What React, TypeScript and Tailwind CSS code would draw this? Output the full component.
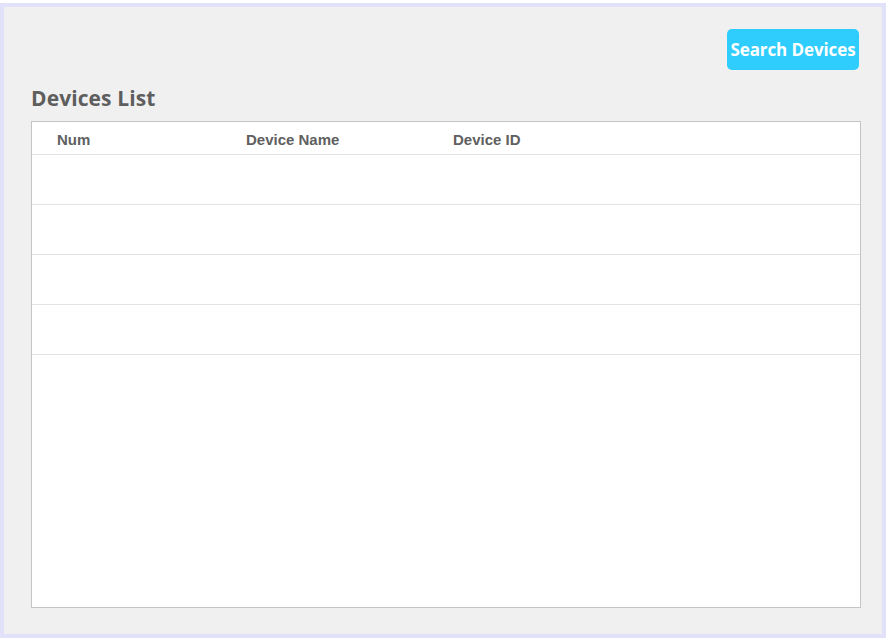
export default function App() {
    const rows = [0, 1, 2, 3];

    return (
        <div className="w-[889px] h-[640px] bg-white pt-[3px] pr-[3px]">
            <div className="h-[635px] border-4 border-[#e1e1fa] bg-[#f0f0f0] pl-[27px] pr-[21px] pt-[22px] flex flex-col">
                {/* header */}
                <div className="flex justify-end pr-[2px]">
                    <button className="w-[132px] h-[41px] rounded-[5px] bg-[#2fcdfd] text-white text-[17px] font-bold font-['Open_Sans',sans-serif] tracking-[-0.1px]">
                        Search Devices
                    </button>
                </div>

                <h1 className="mt-[14px] text-[21px] leading-[28px] font-bold text-[#5e5e5e] font-['Open_Sans',sans-serif] tracking-[0.1px]">
                    Devices List
                </h1>

                {/* table */}
                <div className="mt-[9px] mb-[26px] flex-1 bg-white border border-[#c4c4c4]">
                    <div className="grid grid-cols-[189px_207px_1fr] h-[33px] pt-[4px] items-center border-b border-[#e3e3e3] pl-[25px] text-[15px] font-bold text-[#606060] font-['Liberation_Sans',sans-serif]">
                        <span>Num</span>
                        <span>Device Name</span>
                        <span>Device ID</span>
                    </div>
                    {rows.map((r) => (
                        <div key={r} className="h-[50px] border-b border-[#e3e3e3]" />
                    ))}
                </div>
            </div>
        </div>
    );
}
